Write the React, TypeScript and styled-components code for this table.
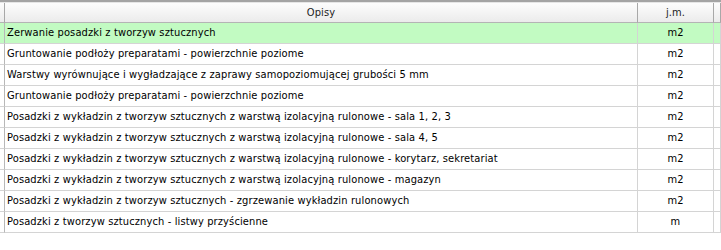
import React from "react";
import styled, { createGlobalStyle } from "styled-components";

const Global = createGlobalStyle`
  html, body { margin: 0; padding: 0; background: #ffffff; }
  body { font-family: "DejaVu Sans Condensed", "DejaVu Sans", "Liberation Sans", sans-serif; }
`;

const Frame = styled.div`
  width: 721px;
  height: 250px;
  overflow: hidden;
  background: #ffffff;
  border-top: 2px solid #a4a4a4;
  box-sizing: border-box;
`;

const Spacer = styled.div`
  height: 1px;
  background: #e6e6e6;
`;

const Grid = styled.div`
  display: grid;
  grid-template-columns: 5px 633px 76px 1fr;
  grid-auto-rows: 21px;
  grid-template-rows: 20px;
`;

const HeadCell = styled.div`
  box-sizing: border-box;
  background: linear-gradient(#fdfdfd, #ebebeb);
  border-right: 1px solid #a8a8a8;
  border-bottom: 1px solid #b4b4b4;
  display: flex;
  align-items: center;
  justify-content: center;
  font-size: 11px;
  letter-spacing: 0.13px;
  color: #222;
  padding-bottom: 1px;
`;

const Cell = styled.div<{ $hl?: boolean; $center?: boolean; $lead?: boolean }>`
  box-sizing: border-box;
  background: ${(p) => (p.$hl ? "#c2fbc2" : "#ffffff")};
  border-right: 1px solid ${(p) => (p.$lead ? "#b8b8b8" : "#d4d4d4")};
  border-bottom: 1px solid #d4d4d4;
  display: flex;
  align-items: center;
  justify-content: ${(p) => (p.$center ? "center" : "flex-start")};
  padding-left: ${(p) => (p.$center ? "0" : "2px")};
  font-size: 11px;
  letter-spacing: 0.13px;
  color: #000;
  white-space: nowrap;
  overflow: hidden;
  padding-bottom: 1px;
`;

const rows: [string, string][] = [
  ["Zerwanie posadzki z tworzyw sztucznych", "m2"],
  ["Gruntowanie podłoży preparatami - powierzchnie poziome", "m2"],
  ["Warstwy wyrównujące i wygładzające z zaprawy samopoziomującej grubości 5 mm", "m2"],
  ["Gruntowanie podłoży preparatami - powierzchnie poziome", "m2"],
  ["Posadzki z wykładzin z tworzyw sztucznych z warstwą izolacyjną rulonowe - sala 1, 2, 3", "m2"],
  ["Posadzki z wykładzin z tworzyw sztucznych z warstwą izolacyjną rulonowe - sala 4, 5", "m2"],
  ["Posadzki z wykładzin z tworzyw sztucznych z warstwą izolacyjną rulonowe - korytarz, sekretariat", "m2"],
  ["Posadzki z wykładzin z tworzyw sztucznych z warstwą izolacyjną rulonowe - magazyn", "m2"],
  ["Posadzki z wykładzin z tworzyw sztucznych - zgrzewanie wykładzin rulonowych", "m2"],
  ["Posadzki z tworzyw sztucznych - listwy przyścienne", "m"],
];

export default function App() {
  return (
    <>
      <Global />
      <Frame>
        <Spacer />
        <Grid>
          <HeadCell />
          <HeadCell>Opisy</HeadCell>
          <HeadCell>j.m.</HeadCell>
          <HeadCell />
          {rows.map(([d, u], i) => (
            <React.Fragment key={i}>
              <Cell $hl={i === 0} $lead />
              <Cell $hl={i === 0}>{d}</Cell>
              <Cell $hl={i === 0} $center>{u}</Cell>
              <Cell $hl={i === 0} />
            </React.Fragment>
          ))}
        </Grid>
      </Frame>
    </>
  );
}
